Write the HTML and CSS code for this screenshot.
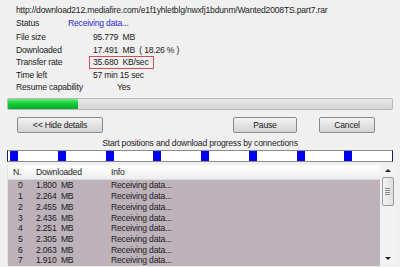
FILE: index.html
```html
<!DOCTYPE html>
<html>
<head>
	<meta charset="utf-8" />
	<title>Download details</title>
	<link rel="stylesheet" href="styles.css">
</head>
<body>
	<div class="window">
		<div class="url">http://download212.mediafire.com/e1f1yhletblg/nwxfj1bdunm/Wanted2008TS.part7.rar</div>

		<div class="statusRow">
			<span class="label">Status</span>
			<span class="statusValue">Receiving data...</span>
		</div>

		<div class="details">
			<div class="row"><span class="label">File size</span><span class="value">95.779  MB</span></div>
			<div class="row"><span class="label">Downloaded</span><span class="value">17.491  MB  ( 18.26 % )</span></div>
			<div class="row"><span class="label">Transfer rate</span><span class="value boxed">35.680  KB/sec</span></div>
			<div class="row"><span class="label">Time left</span><span class="value">57 min 15 sec</span></div>
			<div class="row"><span class="label">Resume capability</span><span class="value resume">Yes</span></div>
		</div>

		<div class="progress"><div class="progressFill" style="width: 18.26%"></div></div>

		<div class="buttons">
			<div class="button hide">&lt;&lt; Hide details</div>
			<div class="button pause">Pause</div>
			<div class="button cancel">Cancel</div>
		</div>

		<div class="caption">Start positions and download progress by connections</div>

		<div class="connections">
			<span class="conn"></span><span class="conn"></span><span class="conn"></span><span class="conn"></span>
			<span class="conn"></span><span class="conn"></span><span class="conn"></span><span class="conn"></span>
		</div>

		<div class="list">
			<div class="listBody">
				<div class="listHead">
					<span class="colN">N.</span>
					<span class="colDl">Downloaded</span>
					<span class="colInfo">Info</span>
				</div>
				<div class="listRows">
					<div class="listRow"><span class="colN">0</span><span class="colDl">1.800  MB</span><span class="colInfo">Receiving data...</span></div>
					<div class="listRow"><span class="colN">1</span><span class="colDl">2.264  MB</span><span class="colInfo">Receiving data...</span></div>
					<div class="listRow"><span class="colN">2</span><span class="colDl">2.455  MB</span><span class="colInfo">Receiving data...</span></div>
					<div class="listRow"><span class="colN">3</span><span class="colDl">2.436  MB</span><span class="colInfo">Receiving data...</span></div>
					<div class="listRow"><span class="colN">4</span><span class="colDl">2.251  MB</span><span class="colInfo">Receiving data...</span></div>
					<div class="listRow"><span class="colN">5</span><span class="colDl">2.305  MB</span><span class="colInfo">Receiving data...</span></div>
					<div class="listRow"><span class="colN">6</span><span class="colDl">2.063  MB</span><span class="colInfo">Receiving data...</span></div>
					<div class="listRow"><span class="colN">7</span><span class="colDl">1.910  MB</span><span class="colInfo">Receiving data...</span></div>
				</div>
			</div>
			<div class="scrollbar">
				<div class="arrowUp"></div>
				<div class="thumb"><span></span><span></span><span></span><span></span></div>
				<div class="track"></div>
				<div class="arrowDown"></div>
			</div>
		</div>
	</div>
</body>
</html>
```

FILE: styles.css
```css
body {
	margin: 0;
	width: 400px;
	height: 267px;
	overflow: hidden;

	background-color: #f0f0f0;

	font-family: "Liberation Sans", Arial, sans-serif;
	font-size: 8.6px;
	letter-spacing: -0.2px;
	color: #1c1c1c;
}
.window {
	padding: 4px 7px 0 7px;
}
.url {
	padding-left: 9px;
	line-height: 12px;
}
.statusRow {
	display: flex;
	margin-top: 1px;
	padding-left: 9px;
	line-height: 12px;
}
.statusRow .label {
	width: 52px;
}
.statusValue {
	color: #2a2ad0;
}
.details {
	margin-top: 2px;
	padding-left: 9px;
}
.row {
	display: flex;
	line-height: 12.6px;
	height: 12.6px;
}
.row .label {
	width: 77px;
}
.value {
	white-space: pre;
}
.boxed {
	margin-left: -4px;
	padding: 0 4px 0 3px;
	height: 11px;
	line-height: 11px;
	border: 1px solid #d05050;
}
.resume {
	padding-left: 24px;
}
.progress {
	margin-top: 4px;
	height: 10px;
	border: 1px solid #b8b8b8;
	border-radius: 2px;
	background: linear-gradient(#e8e8e8, #d6d6d6);
	overflow: hidden;
}
.progressFill {
	height: 100%;
	background: linear-gradient(#6ee880, #14d23a 40%, #07a828);
}
.buttons {
	display: flex;
	margin-top: 7px;
	padding: 0 18px 0 10px;
}
.button {
	height: 14px;
	line-height: 14px;
	text-align: center;
	border: 1px solid #8a8a8a;
	border-radius: 2px;
	background: linear-gradient(#f6f6f6, #e2e2e2 50%, #d6d6d6);
}
.hide {
	width: 84px;
}
.pause {
	width: 62px;
	margin-left: auto;
}
.cancel {
	width: 54px;
	margin-left: 22px;
}
.caption {
	margin-top: 4px;
	line-height: 12px;
	text-align: center;
}
.connections {
	display: grid;
	grid-template-columns: repeat(8, 1fr);
	margin-top: 1px;
	height: 10px;
	padding: 0 1px;
	border: 1px solid #8c8c8c;
	border-left-color: #1a1a50;
	border-right-color: #1a1a50;
	background: #ffffff;
}
.conn {
	width: 8px;
	height: 10px;
	margin-left: 1px;
	background: #0000ee;
}
.list {
	display: flex;
	margin-top: 3px;
	height: 101px;
	border-left: 1px solid #e4e4e4;
	margin-right: -2px;
}
.listBody {
	flex: 1;
	background: #bdb2ba;
}
.listHead {
	display: flex;
	height: 14px;
	line-height: 14px;
	background: linear-gradient(#ffffff, #f6f6f6 60%, #ececec);
	border-bottom: 1px solid #dcdcdc;
}
.listRows {
	padding-top: 0.5px;
}
.listRow {
	display: flex;
	height: 10.7px;
	line-height: 10.7px;
}
.colN {
	width: 28px;
	padding-left: 5px;
	box-sizing: border-box;
}
.listRow .colN {
	padding-left: 10px;
}
.colDl {
	width: 75px;
	white-space: pre;
}
.colInfo {
	flex: 1;
}
.scrollbar {
	display: flex;
	flex-direction: column;
	align-items: center;
	width: 15px;
	background: #f2f2f2;
}
.arrowUp {
	margin-top: 4px;
	width: 0;
	height: 0;
	border-left: 3px solid transparent;
	border-right: 3px solid transparent;
	border-bottom: 3px solid #222;
}
.thumb {
	display: flex;
	flex-direction: column;
	justify-content: center;
	align-items: center;
	gap: 1px;
	margin-top: 5px;
	width: 10px;
	height: 27px;
	border: 1px solid #9a9a9a;
	border-radius: 2px;
	background: linear-gradient(90deg, #f4f4f4, #dedede);
}
.thumb span {
	width: 5px;
	height: 1px;
	background: #8a8a8a;
}
.track {
	flex: 1;
}
.arrowDown {
	margin-bottom: 6px;
	width: 0;
	height: 0;
	border-left: 3px solid transparent;
	border-right: 3px solid transparent;
	border-top: 3px solid #222;
}
```
